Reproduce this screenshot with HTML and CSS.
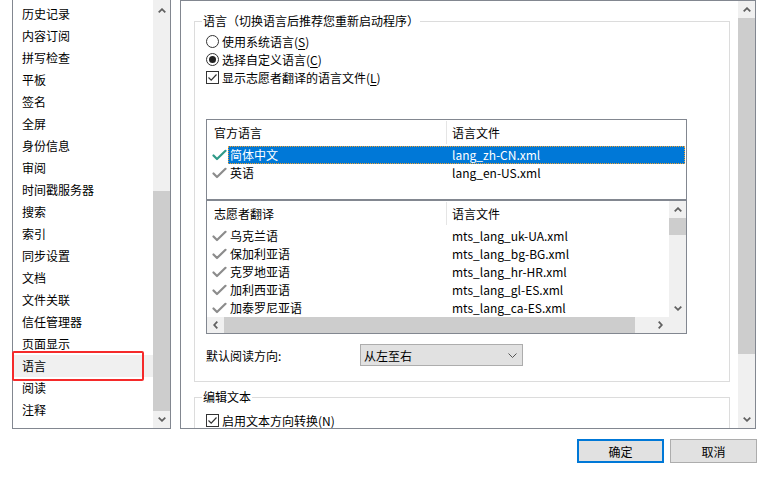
FILE: index.html
```html
<!DOCTYPE html>
<html lang="zh-CN">
<head>
    <meta charset="UTF-8">
    <title>首选项</title>
    <link rel="stylesheet" href="styles.css">
</head>
<body>
    <div class="dialog">
        <div class="panes">
            <!-- category list -->
            <div class="nav">
                <ul class="nav-list">
                    <li>历史记录</li>
                    <li>内容订阅</li>
                    <li>拼写检查</li>
                    <li>平板</li>
                    <li>签名</li>
                    <li>全屏</li>
                    <li>身份信息</li>
                    <li>审阅</li>
                    <li>时间戳服务器</li>
                    <li>搜索</li>
                    <li>索引</li>
                    <li>同步设置</li>
                    <li>文档</li>
                    <li>文件关联</li>
                    <li>信任管理器</li>
                    <li>页面显示</li>
                    <li class="current">语言</li>
                    <li>阅读</li>
                    <li>注释</li>
                </ul>
                <div class="vscroll nav-scroll">
                    <span class="arrow up"><svg width="8" height="5" viewBox="0 0 8 5"><path d="M0.7 4.3 L4 1.2 L7.3 4.3"/></svg></span>
                    <span class="thumb"></span>
                    <span class="arrow down"><svg width="8" height="5" viewBox="0 0 8 5"><path d="M0.7 0.7 L4 3.8 L7.3 0.7"/></svg></span>
                </div>
            </div>

            <!-- settings page -->
            <div class="settings">
                <div class="settings-body">
                    <fieldset class="group">
                        <legend>语言（切换语言后推荐您重新启动程序）</legend>
                        <div class="option"><span class="radio"></span>使用系统语言(<u>S</u>)</div>
                        <div class="option"><span class="radio checked"></span>选择自定义语言(<u>C</u>)</div>
                        <div class="option"><span class="checkbox"><svg width="11" height="11" viewBox="0 0 11 11"><path d="M1.5 5.5 L4.2 8.2 L9.5 2.5"/></svg></span>显示志愿者翻译的语言文件(<u>L</u>)</div>

                        <div class="list list-official">
                            <div class="list-head">
                                <span class="col-name">官方语言</span>
                                <span class="col-file">语言文件</span>
                            </div>
                            <div class="row selected">
                                <span class="check"><svg width="15" height="12" viewBox="0 0 15 12"><path class="teal" d="M1.5 6.5 L5 10 L13.5 1.8"/></svg></span>
                                <span class="cells"><span class="name">简体中文</span><span class="file">lang_zh-CN.xml</span></span>
                            </div>
                            <div class="row">
                                <span class="check"><svg width="15" height="12" viewBox="0 0 15 12"><path d="M1.5 6.5 L5 10 L13.5 1.8"/></svg></span>
                                <span class="cells"><span class="name">英语</span><span class="file">lang_en-US.xml</span></span>
                            </div>
                        </div>

                        <div class="list list-volunteer">
                            <div class="list-main">
                                <div class="list-content">
                                    <div class="list-head">
                                        <span class="col-name">志愿者翻译</span>
                                        <span class="col-file">语言文件</span>
                                    </div>
                                    <div class="row">
                                        <span class="check"><svg width="15" height="12" viewBox="0 0 15 12"><path d="M1.5 6.5 L5 10 L13.5 1.8"/></svg></span>
                                        <span class="cells"><span class="name">乌克兰语</span><span class="file">mts_lang_uk-UA.xml</span></span>
                                    </div>
                                    <div class="row">
                                        <span class="check"><svg width="15" height="12" viewBox="0 0 15 12"><path d="M1.5 6.5 L5 10 L13.5 1.8"/></svg></span>
                                        <span class="cells"><span class="name">保加利亚语</span><span class="file">mts_lang_bg-BG.xml</span></span>
                                    </div>
                                    <div class="row">
                                        <span class="check"><svg width="15" height="12" viewBox="0 0 15 12"><path d="M1.5 6.5 L5 10 L13.5 1.8"/></svg></span>
                                        <span class="cells"><span class="name">克罗地亚语</span><span class="file">mts_lang_hr-HR.xml</span></span>
                                    </div>
                                    <div class="row">
                                        <span class="check"><svg width="15" height="12" viewBox="0 0 15 12"><path d="M1.5 6.5 L5 10 L13.5 1.8"/></svg></span>
                                        <span class="cells"><span class="name">加利西亚语</span><span class="file">mts_lang_gl-ES.xml</span></span>
                                    </div>
                                    <div class="row">
                                        <span class="check"><svg width="15" height="12" viewBox="0 0 15 12"><path d="M1.5 6.5 L5 10 L13.5 1.8"/></svg></span>
                                        <span class="cells"><span class="name">加泰罗尼亚语</span><span class="file">mts_lang_ca-ES.xml</span></span>
                                    </div>
                                </div>
                                <div class="vscroll list-vscroll">
                                    <span class="arrow up"><svg width="8" height="5" viewBox="0 0 8 5"><path d="M0.7 4.3 L4 1.2 L7.3 4.3"/></svg></span>
                                    <span class="thumb"></span>
                                    <span class="track"></span>
                                    <span class="arrow down"><svg width="8" height="5" viewBox="0 0 8 5"><path d="M0.7 0.7 L4 3.8 L7.3 0.7"/></svg></span>
                                </div>
                            </div>
                            <div class="hscroll">
                                <span class="arrow"><svg width="5" height="8" viewBox="0 0 5 8"><path d="M4.3 0.7 L1.2 4 L4.3 7.3"/></svg></span>
                                <span class="thumb"></span>
                                <span class="track"></span>
                                <span class="arrow"><svg width="5" height="8" viewBox="0 0 5 8"><path d="M0.7 0.7 L3.8 4 L0.7 7.3"/></svg></span>
                                <span class="corner"></span>
                            </div>
                        </div>

                        <div class="direction">
                            <span class="direction-label">默认阅读方向:</span>
                            <div class="combo">
                                <span>从左至右</span>
                                <svg width="9" height="5" viewBox="0 0 9 5"><path d="M0.5 0.5 L4.5 4.5 L8.5 0.5"/></svg>
                            </div>
                        </div>
                    </fieldset>

                    <fieldset class="group group-edit">
                        <legend>编辑文本</legend>
                        <div class="option"><span class="checkbox"><svg width="11" height="11" viewBox="0 0 11 11"><path d="M1.5 5.5 L4.2 8.2 L9.5 2.5"/></svg></span>启用文本方向转换(<u>N</u>)</div>
                    </fieldset>
                </div>
                <div class="vscroll page-scroll">
                    <span class="arrow up"><svg width="8" height="5" viewBox="0 0 8 5"><path d="M0.7 4.3 L4 1.2 L7.3 4.3"/></svg></span>
                    <span class="thumb"></span>
                    <span class="track"></span>
                    <span class="arrow down"><svg width="8" height="5" viewBox="0 0 8 5"><path d="M0.7 0.7 L4 3.8 L7.3 0.7"/></svg></span>
                </div>
            </div>
        </div>

        <div class="buttons">
            <button class="default">确定</button>
            <button>取消</button>
        </div>
    </div>
</body>
</html>
```
FILE: styles.css
```css
* {
    box-sizing: border-box;
}

body {
    margin: 0;
    background: #fff;
    font-family: "Noto Sans CJK SC", sans-serif;
    font-size: 12px;
    color: #000;
}

.dialog {
    width: 778px;
    height: 477px;
}

.panes {
    display: flex;
    height: 429px;
}

/* left category list */
.nav {
    display: flex;
    width: 159px;
    margin-left: 12px;
    margin-right: 9px;
    border: 1px solid #828790;
    border-top: none;
}

.nav-list {
    list-style: none;
    margin: 0;
    padding: 3px 0 0;
    width: 140px;
}

.nav-list li {
    position: relative;
    height: 22px;
    line-height: 22px;
    padding-left: 9px;
    white-space: nowrap;
}

.nav-list li.current {
    background: #f0f0f0;
}

.nav-list li.current::after {
    content: "";
    position: absolute;
    left: -1px;
    top: -4px;
    width: 128px;
    height: 26px;
    border: 2px solid #f52a2a;
    border-radius: 2px;
}

/* scrollbars */
.vscroll {
    display: flex;
    flex-direction: column;
    width: 17px;
    background: #f0f0f0;
}

.vscroll .arrow,
.hscroll .arrow {
    display: flex;
    align-items: center;
    justify-content: center;
    flex: none;
}

.vscroll .arrow {
    height: 17px;
}

.arrow svg path {
    fill: none;
    stroke: #606060;
    stroke-width: 1.8;
}

.thumb {
    background: #cdcdcd;
}

.track {
    flex: 1;
}

.nav-scroll .up {
    height: 20px;
}

.nav-scroll .thumb {
    flex: 1;
    margin-top: 171px;
}

.page-scroll .thumb {
    height: 336px;
}

/* right settings page */
.settings {
    display: flex;
    width: 576px;
    border: 1px solid #828790;
}

.settings-body {
    flex: 1;
    overflow: hidden;
    padding: 0 8px 0 13px;
}

.group {
    margin: 12px 0 0;
    padding: 3px 11px 15px;
    border: 1px solid #dcdcdc;
    min-width: 0;
}

.group legend {
    margin-left: -4px;
    padding: 0 1px;
    line-height: 16px;
}

.option {
    display: flex;
    align-items: center;
    height: 18px;
    white-space: nowrap;
}

.option u {
    text-decoration-thickness: 1px;
    text-underline-offset: 2px;
}

.radio,
.checkbox {
    display: flex;
    align-items: center;
    justify-content: center;
    width: 13px;
    height: 13px;
    margin-right: 3px;
    border: 1px solid #333;
    background: #fff;
}

.radio {
    border-radius: 50%;
}

.radio.checked::before {
    content: "";
    width: 7px;
    height: 7px;
    border-radius: 50%;
    background: #222;
}

.checkbox svg path {
    fill: none;
    stroke: #333;
    stroke-width: 1.2;
}

/* language lists */
.list {
    width: 481px;
    border: 1px solid #828790;
}

.list-official {
    height: 81px;
    margin-top: 33px;
}

.list-head {
    display: flex;
    align-items: flex-start;
    height: 26px;
    padding-top: 1px;
}

.col-name {
    width: 240px;
    height: 23px;
    line-height: 23px;
    padding-left: 7px;
    border-right: 1px solid #e5e5e5;
}

.col-file {
    line-height: 23px;
    padding-left: 5px;
}

.row {
    display: flex;
    align-items: center;
    height: 18px;
    white-space: nowrap;
}

.row .check {
    display: flex;
    width: 21px;
    padding-left: 5px;
}

.row .check path {
    fill: none;
    stroke: #8c8c8c;
    stroke-width: 2.2;
    stroke-linecap: round;
    stroke-linejoin: round;
}

.row .check path.teal {
    stroke: #2f9a88;
}

.cells {
    display: flex;
    flex: 1;
    height: 18px;
    line-height: 18px;
}

.cells .name {
    width: 218px;
    padding-left: 2px;
}

.cells .file {
    padding-left: 6px;
}

.row.selected .cells {
    margin-right: 1px;
    background: #0078d7;
    color: #fff;
    outline: 1px dotted #f0a030;
    outline-offset: -1px;
}

.list-volunteer {
    height: 134px;
}

.list-main {
    display: flex;
    height: 116px;
}

.list-content {
    flex: 1;
    overflow: hidden;
}

.list-vscroll .thumb {
    height: 17px;
}

.hscroll {
    display: flex;
    height: 16px;
    background: #f0f0f0;
}

.hscroll .arrow {
    width: 17px;
}

.hscroll .thumb {
    width: 411px;
}

.hscroll .corner {
    width: 17px;
}

/* reading direction */
.direction {
    display: flex;
    align-items: center;
    margin-top: 10px;
}

.direction-label {
    width: 154px;
}

.combo {
    display: flex;
    align-items: center;
    justify-content: space-between;
    width: 163px;
    height: 22px;
    padding: 0 5px 0 3px;
    background: #e1e1e1;
    border: 1px solid #adadad;
}

.combo svg path {
    fill: none;
    stroke: #555;
    stroke-width: 1;
}

.group-edit {
    margin-top: 7px;
    padding-top: 6px;
}

/* dialog buttons */
.buttons {
    display: flex;
    justify-content: flex-end;
    gap: 6px;
    margin-top: 10px;
    padding-right: 21px;
}

.buttons button {
    width: 87px;
    height: 24px;
    padding: 0;
    font-family: inherit;
    font-size: 12px;
    color: #000;
    background: #e1e1e1;
    border: 1px solid #adadad;
}

.buttons button.default {
    border: 2px solid #0078d7;
}
```
